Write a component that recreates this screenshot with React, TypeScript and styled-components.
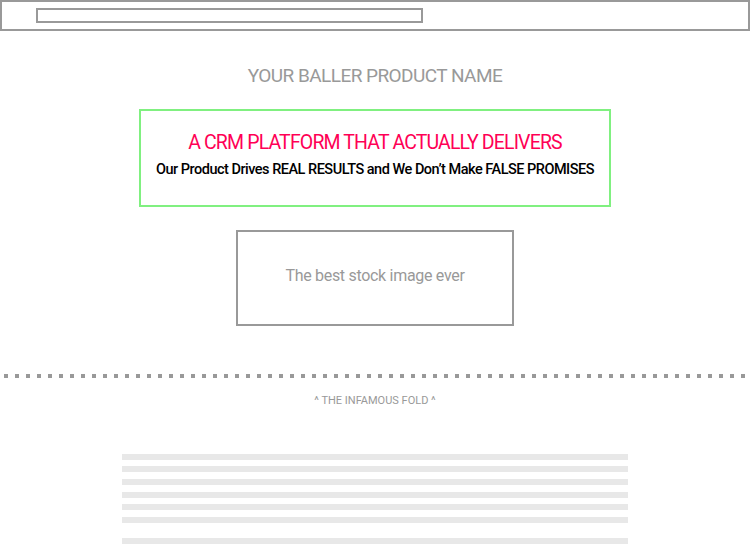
import React from "react";
import styled, { createGlobalStyle } from "styled-components";

const GlobalStyle = createGlobalStyle`
  html, body { margin: 0; padding: 0; background: #fff; }
  body { font-family: Roboto, "Liberation Sans", sans-serif; }
  * { box-sizing: border-box; }
`;

const Page = styled.div`
  width: 750px;
  height: 550px;
  overflow: hidden;
  display: flex;
  flex-direction: column;
  align-items: center;
`;

const BrowserBar = styled.div`
  align-self: stretch;
  height: 31px;
  border: 2px solid #999;
  padding: 6px 0 0 34px;
`;

const AddressField = styled.div`
  width: 387px;
  height: 15px;
  border: 2px solid #999;
`;

const ProductName = styled.h1`
  margin: 33px 0 0;
  font-size: 19px;
  line-height: 24px;
  letter-spacing: -0.55px;
  font-weight: 400;
  color: #999;
  white-space: nowrap;
`;

const HeroBox = styled.section`
  margin-top: 21px;
  width: 472px;
  border: 2px solid #80f080;
  padding: 20px 0 26px;
  display: flex;
  flex-direction: column;
  align-items: center;
`;

const Headline = styled.h2`
  margin: 0;
  font-size: 19.5px;
  line-height: 24px;
  letter-spacing: -0.85px;
  font-weight: 400;
  color: #ff0055;
  white-space: nowrap;
`;

const Subline = styled.p`
  margin: 6px 0 0;
  font-size: 14.5px;
  line-height: 18px;
  letter-spacing: -0.5px;
  font-weight: 500;
  color: #000;
  white-space: nowrap;
`;

const ImageBox = styled.div`
  margin-top: 23px;
  width: 278px;
  height: 96px;
  border: 2px solid #999;
  display: flex;
  align-items: center;
  justify-content: center;
  padding-bottom: 4px;
  font-size: 16px;
  line-height: 20px;
  letter-spacing: -0.3px;
  color: #999;
  white-space: nowrap;
`;

const FoldLine = styled.div`
  align-self: stretch;
  margin-top: 48px;
  height: 4px;
  background-image: linear-gradient(to right, #999 4px, transparent 4px);
  background-size: 11px 4px;
  background-position: 4px 0;
  background-repeat: repeat-x;
`;

const FoldLabel = styled.div`
  margin-top: 16px;
  font-size: 11px;
  line-height: 14px;
  color: #999;
  white-space: nowrap;
`;

const TextLines = styled.div`
  margin-top: 46px;
  width: 506px;
  display: flex;
  flex-direction: column;
`;

const TextLine = styled.div<{ $gap: number }>`
  height: 6px;
  margin-top: ${(p) => p.$gap}px;
  background: #e8e8e8;
`;

const lineGaps = [0, 6, 7, 7, 6, 7, 15];

export default function App() {
  return (
    <>
      <GlobalStyle />
      <Page>
        <BrowserBar>
          <AddressField />
        </BrowserBar>
        <ProductName>YOUR BALLER PRODUCT NAME</ProductName>
        <HeroBox>
          <Headline>A CRM PLATFORM THAT ACTUALLY DELIVERS</Headline>
          <Subline>Our Product Drives REAL RESULTS and We Don’t Make FALSE PROMISES</Subline>
        </HeroBox>
        <ImageBox>The best stock image ever</ImageBox>
        <FoldLine />
        <FoldLabel>^ THE INFAMOUS FOLD ^</FoldLabel>
        <TextLines>
          {lineGaps.map((g, i) => (
            <TextLine key={i} $gap={g} />
          ))}
        </TextLines>
      </Page>
    </>
  );
}
